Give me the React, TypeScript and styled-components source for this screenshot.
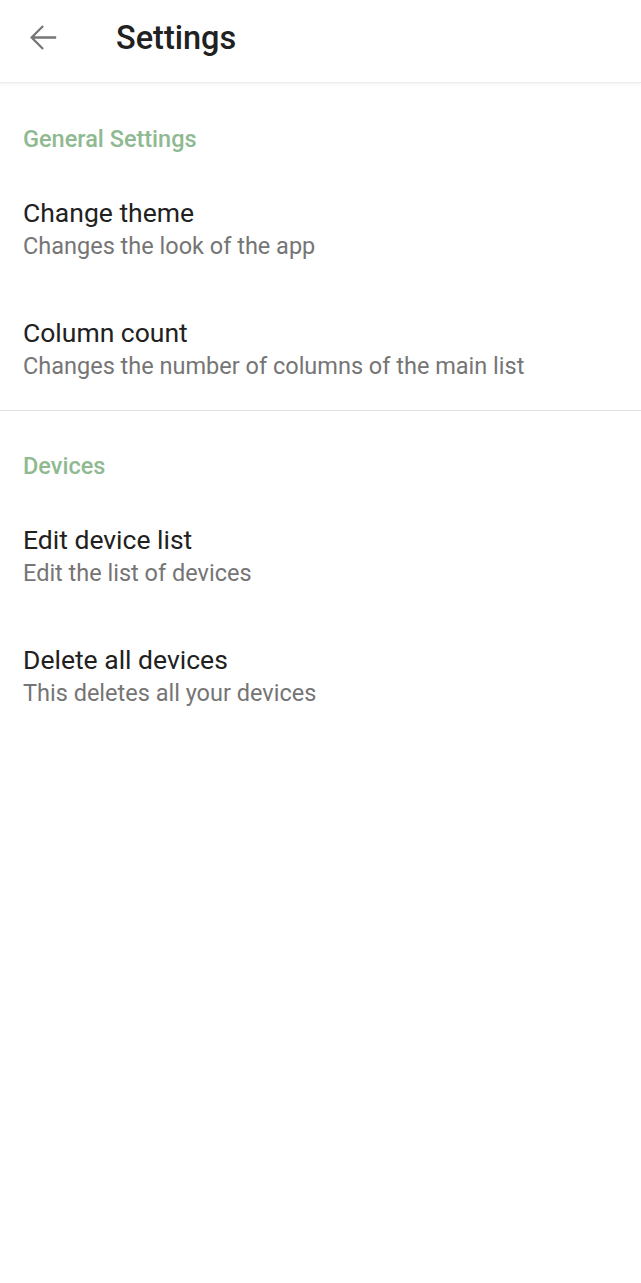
import React from "react";
import styled, { createGlobalStyle } from "styled-components";

const Global = createGlobalStyle`
  html, body { margin: 0; padding: 0; background: #ffffff; }
  body { font-family: Roboto, "Noto Sans", "Liberation Sans", sans-serif; -webkit-font-smoothing: antialiased; }
`;

const Page = styled.div`
  width: 641px;
  min-height: 1283px;
  background: #ffffff;
  display: flex;
  flex-direction: column;
`;

const Toolbar = styled.header`
  height: 82px;
  display: flex;
  align-items: center;
  background: #ffffff;
  box-shadow: 0 1px 0 #ececec, 0 2px 3px rgba(0, 0, 0, 0.06);
  position: relative;
  z-index: 1;
  flex-shrink: 0;
`;

const BackButton = styled.button`
  width: 84px;
  height: 74px;
  display: flex;
  align-items: center;
  justify-content: center;
  border: 0;
  background: transparent;
  padding: 0;
  margin-right: 32px;
  margin-top: -8px;
  cursor: pointer;
`;

const Title = styled.h1`
  margin: 0;
  font-size: 32.5px;
  font-weight: 500;
  color: #212121;
  margin-top: -6px;
`;

const Section = styled.section<{ $divider?: boolean }>`
  display: flex;
  flex-direction: column;
  padding-top: ${(p) => (p.$divider ? 40 : 42)}px;
  border-top: ${(p) => (p.$divider ? "1px solid #e0e0e0" : "none")};
`;

const Category = styled.div`
  padding: 0 23px 16px;
  font-size: 23.5px;
  line-height: 30px;
  font-weight: 500;
  color: #8fba91;
`;

const Item = styled.div`
  display: flex;
  flex-direction: column;
  padding: 27px 23px;
`;

const ItemTitle = styled.div`
  font-size: 26.5px;
  line-height: 32px;
  color: #212121;
`;

const ItemSummary = styled.div`
  font-size: 23.5px;
  line-height: 34px;
  color: #757575;
`;

const sections = [
  {
    title: "General Settings",
    items: [
      { title: "Change theme", summary: "Changes the look of the app" },
      { title: "Column count", summary: "Changes the number of columns of the main list" },
    ],
  },
  {
    title: "Devices",
    items: [
      { title: "Edit device list", summary: "Edit the list of devices" },
      { title: "Delete all devices", summary: "This deletes all your devices" },
    ],
  },
];

export default function App() {
  return (
    <Page>
      <Global />
      <Toolbar>
        <BackButton aria-label="Back">
          <svg width="41" height="41" viewBox="0 0 24 24">
            <path d="M20 11.2H7.3l5.5-5.5L11.9 4.8 4.7 12l7.2 7.2.9-.9-5.5-5.5H20v-1.6z" fill="#757575" />
          </svg>
        </BackButton>
        <Title>Settings</Title>
      </Toolbar>
      {sections.map((s, i) => (
        <Section key={s.title} $divider={i > 0}>
          <Category>{s.title}</Category>
          {s.items.map((it) => (
            <Item key={it.title}>
              <ItemTitle>{it.title}</ItemTitle>
              <ItemSummary>{it.summary}</ItemSummary>
            </Item>
          ))}
        </Section>
      ))}
    </Page>
  );
}
